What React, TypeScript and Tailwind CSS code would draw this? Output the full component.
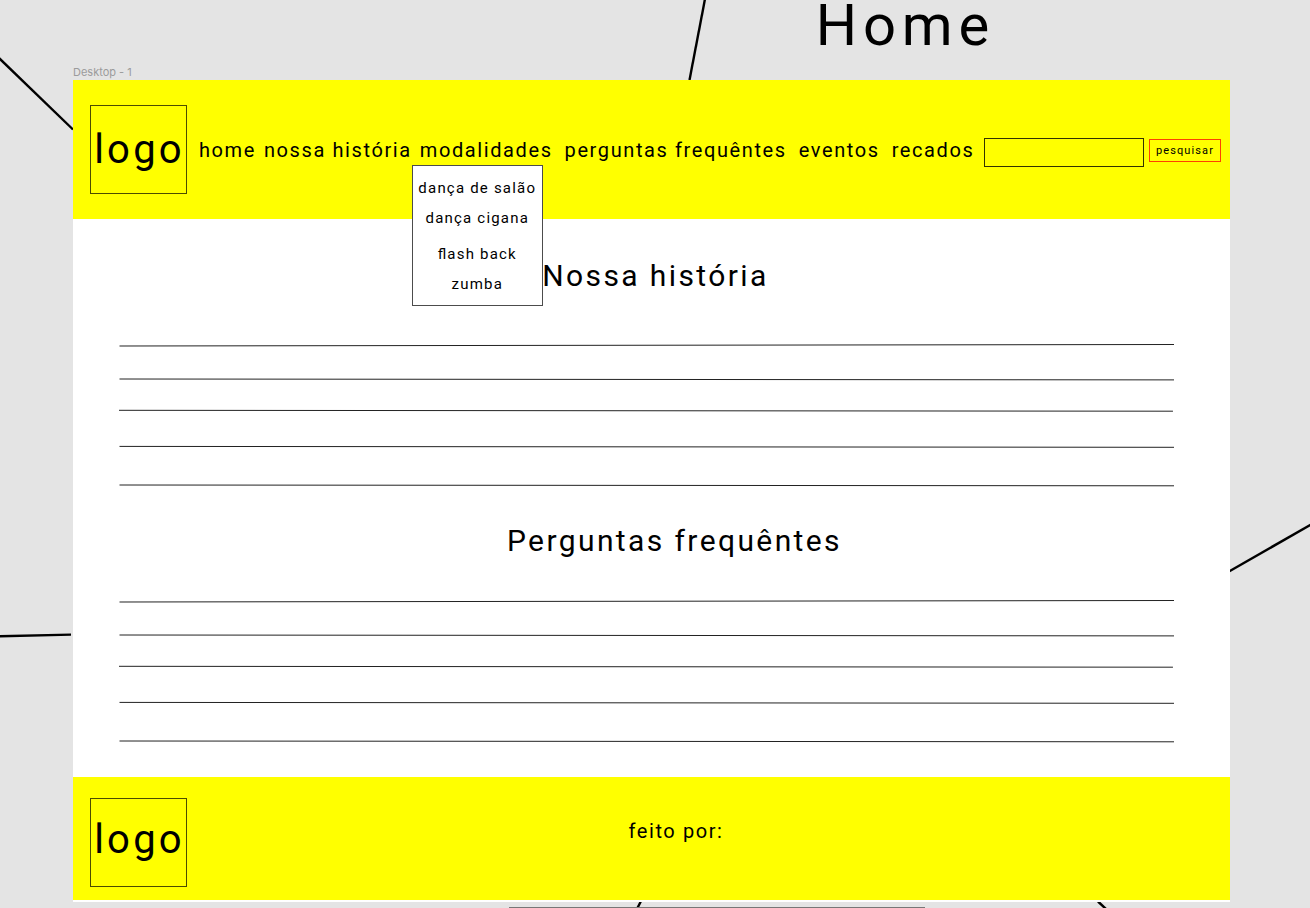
import type { ReactNode } from 'react';

const dances = [
  ['dança de salão', 'dança cigana'],
  ['flash back', 'zumba'],
];

function Logo({ raised = false }: { raised?: boolean }) {
  return (
    <div
      className={`flex h-[89px] w-[97px] shrink-0 items-center justify-center border border-black/70 pl-[2px] text-[40px] leading-none tracking-[0.08em] ${raised ? 'pb-[6px]' : 'pb-0'}`}
    >
      <span>logo</span>
    </div>
  );
}

function NavLink({ children }: { children: ReactNode }) {
  return (
    <a href="#" className="whitespace-nowrap">
      {children}
    </a>
  );
}

function Connectors() {
  return (
    <svg className="pointer-events-none absolute inset-0 size-full" stroke="black" strokeWidth="2.4" aria-hidden="true">
      <line x1="-1" y1="58" x2="73" y2="129.5" />
      <line x1="705" y1="-1" x2="689.5" y2="80" />
      <line x1="1229" y1="571.5" x2="1311" y2="524.5" />
      <line x1="-1" y1="636.2" x2="71" y2="634.6" />
      <line x1="641" y1="901" x2="637" y2="909" />
      <line x1="1098" y1="901.5" x2="1106" y2="909" />
      <line x1="509" y1="907.5" x2="925" y2="907.5" stroke="#777" strokeWidth="1" />
    </svg>
  );
}

function TextLines() {
  return (
    <svg className="block h-[144px] w-full overflow-visible" stroke="#222" strokeWidth="1" aria-hidden="true">
      <line x1="0.5" y1="2" x2="100%" y2="0.5" />
      <line x1="0.5" y1="35" x2="100%" y2="35.9" />
      <line x1="0" y1="66.3" x2="99.9%" y2="67.2" />
      <line x1="0.5" y1="102.4" x2="100%" y2="103.3" />
      <line x1="0.5" y1="141" x2="100%" y2="141.8" />
    </svg>
  );
}

export default function App() {
  return (
    <div className="relative min-h-screen overflow-hidden bg-[#e4e4e4] pr-20 pl-[73px] font-[Roboto,sans-serif] text-black">
      <Connectors />
      <div className="relative flex h-20 justify-between">
        <span className="self-end font-[Inter,sans-serif] text-[11px] leading-4 text-[#9b9b9b]">
          Desktop - 1
        </span>
        <h1 className="mr-[235px] text-[58px] leading-[50px] tracking-widest">Home</h1>
      </div>

      <div className="relative bg-white pb-[2px]">
        <header className="flex items-center bg-[#ffff00] py-[25px] pr-[9px] pl-[17px]">
          <Logo />
          <nav className="ml-3 flex gap-3 text-[20px] leading-6 tracking-[0.08em]">
            <div className="flex gap-2">
              <NavLink>home</NavLink>
              <NavLink>nossa história</NavLink>
              <div className="relative">
                <NavLink>modalidades</NavLink>
                <div className="absolute top-[27px] -left-2 z-10 flex h-[141px] w-[131px] flex-col gap-[6px] border border-black/70 bg-white pt-[7px] text-center text-[15px] leading-[30px] tracking-[0.08em] [font-feature-settings:'liga']">
                  {dances.map((group) => (
                    <div key={group[0]} className="flex flex-col">
                      {group.map((name) => (
                        <a key={name} href="#" className="whitespace-nowrap">
                          {name}
                        </a>
                      ))}
                    </div>
                  ))}
                </div>
              </div>
            </div>
            <NavLink>perguntas frequêntes</NavLink>
            <NavLink>eventos</NavLink>
            <NavLink>recados</NavLink>
          </nav>
          <form className="mt-[2px] ml-[10px] flex min-w-0 flex-1 items-center gap-[5px]" onSubmit={(e) => e.preventDefault()}>
            <input
              type="text"
              aria-label="pesquisar"
              className="mt-1 h-[29px] min-w-0 flex-1 border border-black/80 bg-transparent px-2 text-[15px]"
            />
            <button type="submit" className="h-[23px] w-[72px] shrink-0 border border-[#ff4000] text-[11px] leading-none tracking-widest">
              pesquisar
            </button>
          </form>
        </header>

        <main className="pr-14 pb-[33px] pl-[46px]">
          <h2 className="pt-[39px] pl-[18px] text-center text-[30px] leading-9 tracking-[0.08em]">Nossa história</h2>
          <div className="pt-[50px]">
            <TextLines />
          </div>
          <h2 className="pt-[35px] pl-[56px] text-center text-[30px] leading-9 tracking-[0.08em]">Perguntas frequêntes</h2>
          <div className="pt-[41px]">
            <TextLines />
          </div>
        </main>

        <footer className="flex bg-[#ffff00] pt-[21px] pb-[13px] pl-[17px]">
          <Logo raised />
          <p className="flex-1 pt-[21px] pr-[65px] text-center text-[20px] leading-6 tracking-[0.08em]">feito por:</p>
        </footer>
      </div>
    </div>
  );
}
